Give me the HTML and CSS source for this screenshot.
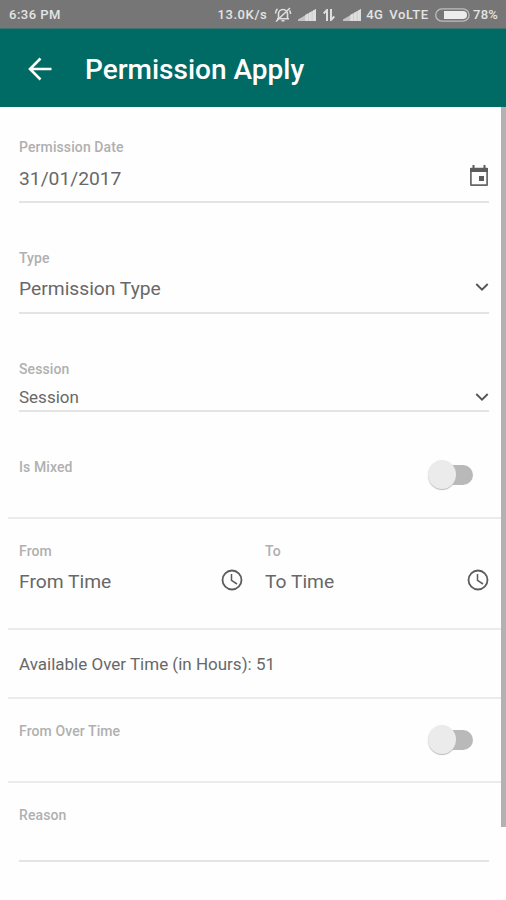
FILE: index.html
```html
<!DOCTYPE html>
<html lang="en">
<head>
<meta charset="utf-8">
<title>Permission Apply</title>
<link rel="stylesheet" href="styles.css">
</head>
<body>
<div class="status">
  <span class="clock">6:36 PM</span>
  <span class="speed">13.0K/s</span>
  <svg class="mute" width="18" height="16" viewBox="0 0 18 16"><path d="M4.500 11.500V7a4.500 4.500 0 0 1 9 0v4.500M3 11.800h12M7.500 13.800h3M2 14.500 16 1M1.500 6.500q0-3 2-4.500M16.500 7q0-2.500-1-3.500" fill="none" stroke="#dedede" stroke-width="1.600"/></svg>
  <svg class="signal" width="18" height="12" viewBox="0 0 18 12"><path d="M0 12v-1.500L18 0v12z" fill="#c4c4c4"/><path d="M7.200 12V6l3-1.800V12zM10.800 12V4l3-1.800V12zM14.400 12V2L18 0v12z" fill="#dedede"/></svg>
  <svg class="data" width="12" height="12" viewBox="0 0 12 12"><path d="M4 12V1L.7 4.500M8 0v11l3.300-3.500" fill="none" stroke="#dedede" stroke-width="2"/></svg>
  <svg class="signal second" width="18" height="12" viewBox="0 0 18 12"><path d="M0 12v-1.500L18 0v12z" fill="#c4c4c4"/><path d="M7.200 12V6l3-1.800V12zM10.800 12V4l3-1.800V12zM14.400 12V2L18 0v12z" fill="#dedede"/></svg>
  <span class="network">4G</span>
  <span class="volte">VoLTE</span>
  <svg class="battery" width="35" height="14" viewBox="0 0 35 14"><rect x=".7" y=".9" width="33.400" height="12.200" rx="6.100" fill="none" stroke="#bdbdbd" stroke-width="1.300"/><path d="M9 3h19q4 0 4 4t-4 4H9z" fill="#ececec"/></svg>
  <span class="percent">78%</span>
</div>
<header class="appbar">
  <svg width="24" height="24" viewBox="0 0 24 24"><path d="M23.500 12H2M12.500 1.500 2 12l10.500 10.500" fill="none" stroke="#fff" stroke-width="2.600"/></svg>
  <h1>Permission Apply</h1>
</header>
<div class="body">
<main class="form">
  <section class="field date">
    <label>Permission Date</label>
    <div class="value"><span>31/01/2017</span>
      <svg width="20" height="22" viewBox="0 0 20 22"><path d="M1.900 3.500h16.200v16.600H1.900z" fill="none" stroke="#666" stroke-width="1.700" stroke-linejoin="round"/><path d="M1 3h18v4H1zM3.500 0h2v4h-2zM14.500 0h2v4h-2zM10 11h5v5h-5z" fill="#5c5c5c"/></svg>
    </div>
  </section>
  <section class="field type">
    <label>Type</label>
    <div class="value"><span>Permission Type</span>
      <svg class="chevron" width="14" height="10" viewBox="0 0 14 10"><path d="m1.300 2 5.700 5.600L12.700 2" fill="none" stroke="#555" stroke-width="1.900"/></svg>
    </div>
  </section>
  <section class="field session">
    <label>Session</label>
    <div class="value"><span>Session</span>
      <svg class="chevron" width="14" height="10" viewBox="0 0 14 10"><path d="m1.300 2 5.700 5.600L12.700 2" fill="none" stroke="#555" stroke-width="1.900"/></svg>
    </div>
  </section>
  <section class="row mixed"><label>Is Mixed</label><span class="switch"></span></section>
  <section class="row times">
    <div class="time from"><label>From</label>
      <div class="value"><span>From Time</span>
        <svg width="22" height="22" viewBox="0 0 22 22"><g fill="none" stroke="#5c5c5c"><circle cx="11" cy="11" r="9.500" stroke-width="1.800"/><path d="M10.500 5v6.400l5.500 3.600" stroke-width="1.500"/></g></svg>
      </div>
    </div>
    <div class="time to"><label>To</label>
      <div class="value"><span>To Time</span>
        <svg width="22" height="22" viewBox="0 0 22 22"><g fill="none" stroke="#5c5c5c"><circle cx="11" cy="11" r="9.500" stroke-width="1.800"/><path d="M10.500 5v6.400l5.500 3.600" stroke-width="1.500"/></g></svg>
      </div>
    </div>
  </section>
  <section class="row available"><span>Available Over Time (in Hours): 51</span></section>
  <section class="row overtime"><label>From Over Time</label><span class="switch"></span></section>
  <section class="field reason"><label>Reason</label></section>
</main>
<div class="scrollbar"></div>
</div>
</body>
</html>
```
FILE: styles.css
```css
* { box-sizing: border-box; }
body { margin: 0; height: 900px; overflow: hidden; background: #fefefe; font-family: Roboto, sans-serif; color: #686868; }
svg { display: block; flex: none; }
.status { display: flex; align-items: center; height: 29px; padding: 1px 8px 0 9px; background: #767676; color: #e4e4e4; font-size: 13px; font-weight: 500; white-space: nowrap; border-bottom: 1px solid #3d7572; }
.clock { width: 209px; letter-spacing: .5px; }
.speed { width: 57px; letter-spacing: .6px; }
.signal { margin-left: 6px; }
.data { margin-left: 7px; }
.second { margin-left: 8px; }
.network { margin-left: 5px; width: 23px; letter-spacing: .4px; }
.volte { width: 46px; letter-spacing: .7px; }
.battery { width: 35px; }
.percent { margin-left: 3px; letter-spacing: .2px; }
.appbar { display: flex; align-items: center; height: 78px; padding: 1px 28px 0; gap: 33px; background: #006a64; color: #fff; }
.appbar h1 { margin: 2px 0 0; font-size: 28px; font-weight: 500; line-height: 34px; white-space: nowrap; }
.body { display: flex; height: 793px; }
.form { width: 501px; }
.scrollbar { width: 5px; height: 720px; background: #b2b2b2; }
label { display: block; font-size: 14px; font-weight: 500; line-height: 16px; color: #b0b0b0; letter-spacing: .1px; white-space: nowrap; }
.value { display: flex; align-items: center; justify-content: space-between; height: 24px; font-size: 19.250px; white-space: nowrap; }
.field { margin: 0 12px 0 19px; border-bottom: 2px solid #e4e4e4; }
.date { height: 96px; padding-top: 32px; }
.date .value { margin-top: 11px; }
.date svg { margin-top: -5px; }
.type { height: 111px; padding-top: 47px; }
.type .value { margin-top: 10px; }
.chevron { margin-top: -3px; }
.session { height: 98px; padding-top: 47px; }
.session .value { margin-top: 8px; font-size: 17px; }
.session .chevron { margin-top: -1px; }
.row { display: flex; margin-left: 8px; padding-left: 11px; border-bottom: 2px solid #ebebeb; }
.mixed { height: 107px; padding-top: 47px; padding-right: 28px; justify-content: space-between; }
.switch { position: relative; width: 45px; height: 30px; }
.switch::before { content: ""; position: absolute; left: 10px; top: 5px; width: 35px; height: 20px; border-radius: 10px; background: #b9b9b9; }
.switch::after { content: ""; position: absolute; left: 0; top: 0; width: 28px; height: 29px; border-radius: 50%; background: #ebebeb; box-shadow: 0 1px 1px #bbb; }
.mixed .switch { margin-top: 1px; }
.times { height: 111px; padding-top: 24px; gap: 22px; }
.from { width: 224px; }
.to { width: 224px; }
.times .value { margin-top: 10px; }
.times svg { margin-top: -3px; }
.available { height: 69px; align-items: center; font-size: 17px; }
.overtime { height: 84px; padding-top: 24px; padding-right: 28px; justify-content: space-between; }
.overtime .switch { margin-top: 2px; }
.reason { height: 79px; padding-top: 24px; }
```
